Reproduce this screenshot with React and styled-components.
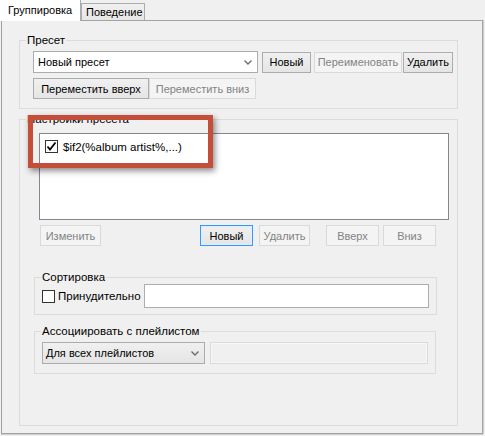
import React from 'react';
import styled, { createGlobalStyle } from 'styled-components';

const Global = createGlobalStyle`
  html, body { margin: 0; padding: 0; background: #f0f0f0; }
  body {
    font-family: "Liberation Sans", Arial, sans-serif;
    font-size: 11px;
    color: #000;
  }
  * { box-sizing: border-box; }
`;

const Window = styled.div`
  position: relative;
  width: 485px;
  height: 436px;
  background: #f0f0f0;
  overflow: hidden;
`;

const TabStrip = styled.div`
  display: flex;
  align-items: flex-end;
  height: 20px;
  position: relative;
  z-index: 1;
`;

const Tab = styled.div`
  display: flex;
  align-items: center;
  white-space: nowrap;
  font-size: 11px;
  width: ${p => p.$w}px;
  height: ${p => (p.$active ? 21 : 17)}px;
  margin-bottom: ${p => (p.$active ? -1 : 0)}px;
  padding-left: ${p => (p.$active ? 8 : 4)}px;
  padding-bottom: ${p => (p.$active ? 2 : 0)}px;
  background: ${p => (p.$active ? '#ffffff' : 'linear-gradient(#f0f0f0, #e6e6e6)')};
  border: 1px solid #acacac;
  border-left: ${p => (p.$active ? 'none' : '1px solid #acacac')};
  border-top: ${p => (p.$active ? 'none' : '1px solid #acacac')};
  border-bottom: none;
`;

const Panel = styled.div`
  margin-left: 1px;
  width: 482px;
  height: 414px;
  border: 1px solid #a3a3a3;
  box-shadow: 0 1px 0 #cfcfcf, 1px 0 0 #cfcfcf;
  padding: 12px 0 0 17px;
`;

const Group = styled.fieldset`
  margin: ${p => p.$mt || 0}px 0 0 0;
  width: ${p => p.$w}px;
  border: 1px solid #dcdcdc;
  padding: ${p => p.$pad};
  min-width: 0;
`;

const Legend = styled.legend`
  margin-left: ${p => p.$ml}px;
  padding: 0 1px;
  line-height: 14px;
  font-size: 11.5px;
`;

const Row = styled.div`
  display: flex;
  align-items: center;
  margin-top: ${p => p.$mt || 0}px;
  margin-left: ${p => p.$ml || 0}px;
`;

const Button = styled.div`
  display: flex;
  align-items: center;
  justify-content: center;
  white-space: nowrap;
  width: ${p => p.$w}px;
  height: 21px;
  margin-left: ${p => p.$ml || 0}px;
  color: ${p => (p.$disabled ? '#838383' : '#000')};
  background: ${p => (p.$disabled ? '#f4f4f4' : 'linear-gradient(#f0f0f0, #e5e5e5)')};
  border: 1px solid ${p => (p.$disabled ? '#d9d9d9' : p.$focus ? '#3399ff' : '#acacac')};
  box-shadow: ${p => (p.$focus ? 'inset 0 0 0 1px #e0efff' : 'none')};
`;

const Combo = styled.div`
  display: flex;
  align-items: center;
  justify-content: space-between;
  width: ${p => p.$w}px;
  height: 22px;
  padding: 0 5px 0 ${p => p.$pl}px;
  background: ${p => (p.$flat ? '#ffffff' : 'linear-gradient(#f0f0f0, #e5e5e5)')};
  border: 1px solid #acacac;
  white-space: nowrap;
`;

const Chevron = () => (
  <svg width="8" height="5" viewBox="0 0 8 5">
    <polyline points="0.5,0.5 4,4 7.5,0.5" fill="none" stroke="#6d6d6d" strokeWidth="1.4" />
  </svg>
);

const TextBox = styled.div`
  width: ${p => p.$w}px;
  height: ${p => p.$h}px;
  margin-left: ${p => p.$ml};
  flex: none;
  background: ${p => (p.$disabled ? '#f0f0f0' : '#ffffff')};
  border: 1px solid ${p => (p.$disabled ? '#dadada' : '#abadb3')};
  box-shadow: ${p => (p.$disabled ? 'inset 0 0 0 1px #f7f7f7' : 'none')};
`;

const ListBox = styled.div`
  margin-left: 5px;
  width: 410px;
  height: 87px;
  background: #ffffff;
  border: 1px solid #828790;
  padding: 6px 0 0 5px;
`;

const Check = styled.span`
  display: inline-flex;
  align-items: center;
  justify-content: center;
  width: 13px;
  height: 13px;
  flex: none;
  background: #ffffff;
  border: 1px solid #333333;
`;

const CheckLabel = styled.span`
  margin-left: ${p => p.$ml}px;
  white-space: nowrap;
  font-size: 11.5px;
`;

const Highlight = styled.div`
  position: absolute;
  left: 28px;
  top: 115px;
  width: 185px;
  height: 53px;
  border: 5px solid #c44e3a;
  box-shadow: 2px 3px 6px rgba(0, 0, 0, 0.45);
  pointer-events: none;
`;

const Tick = () => (
  <svg width="11" height="11" viewBox="0 0 11 11">
    <polyline points="1.5,5.5 4,8.5 9.5,1.5" fill="none" stroke="#000" strokeWidth="1.8" />
  </svg>
);

export default function App() {
  return (
    <Window>
      <Global />
      <TabStrip>
        <Tab $active $w={81}>Группировка</Tab>
        <Tab $w={64}>Поведение</Tab>
      </TabStrip>
      <Panel>
        <Group $w={439} $pad="4px 0 9px 13px">
          <Legend $ml={-7}>Пресет</Legend>
          <Row>
            <Combo $w={225} $pl={4} $flat>
              <span>Новый пресет</span>
              <Chevron />
            </Combo>
            <Button $w={49} $ml={4}>Новый</Button>
            <Button $w={88} $ml={3} $disabled>Переименовать</Button>
            <Button $w={50} $ml={1}>Удалить</Button>
          </Row>
          <Row $mt={5}>
            <Button $w={116}>Переместить вверх</Button>
            <Button $w={107} $disabled>Переместить вниз</Button>
          </Row>
        </Group>

        <Group $w={439} $mt={3} $pad="7px 0 51px 14px">
          <Legend $ml={-8}>Настройки пресета</Legend>
          <ListBox>
            <Row>
              <Check><Tick /></Check>
              <CheckLabel $ml={5}>$if2(%album artist%,...)</CheckLabel>
            </Row>
          </ListBox>
          <Row $mt={5} $ml={6}>
            <Button $w={61} $disabled>Изменить</Button>
            <Button $w={53} $ml={99} $focus>Новый</Button>
            <Button $w={51} $ml={6} $disabled>Удалить</Button>
            <Button $w={53} $ml={16} $disabled>Вверх</Button>
            <Button $w={53} $ml={4} $disabled>Вниз</Button>
          </Row>

          <Group $w={403} $mt={24} $pad="0 7px 6px 7px">
            <Legend $ml={-1}>Сортировка</Legend>
            <Row>
              <Check />
              <CheckLabel $ml={3}>Принудительно</CheckLabel>
              <TextBox $w={285} $h={24} $ml="auto" />
            </Row>
          </Group>

          <Group $w={402} $mt={9} $pad="4px 0 9px 7px">
            <Legend $ml={-1}>Ассоциировать с плейлистом</Legend>
            <Row>
              <Combo $w={163} $pl={3}>
                <span>Для всех плейлистов</span>
                <Chevron />
              </Combo>
              <TextBox $w={218} $h={22} $ml="5px" $disabled />
            </Row>
          </Group>
        </Group>
      </Panel>
      <Highlight />
    </Window>
  );
}
